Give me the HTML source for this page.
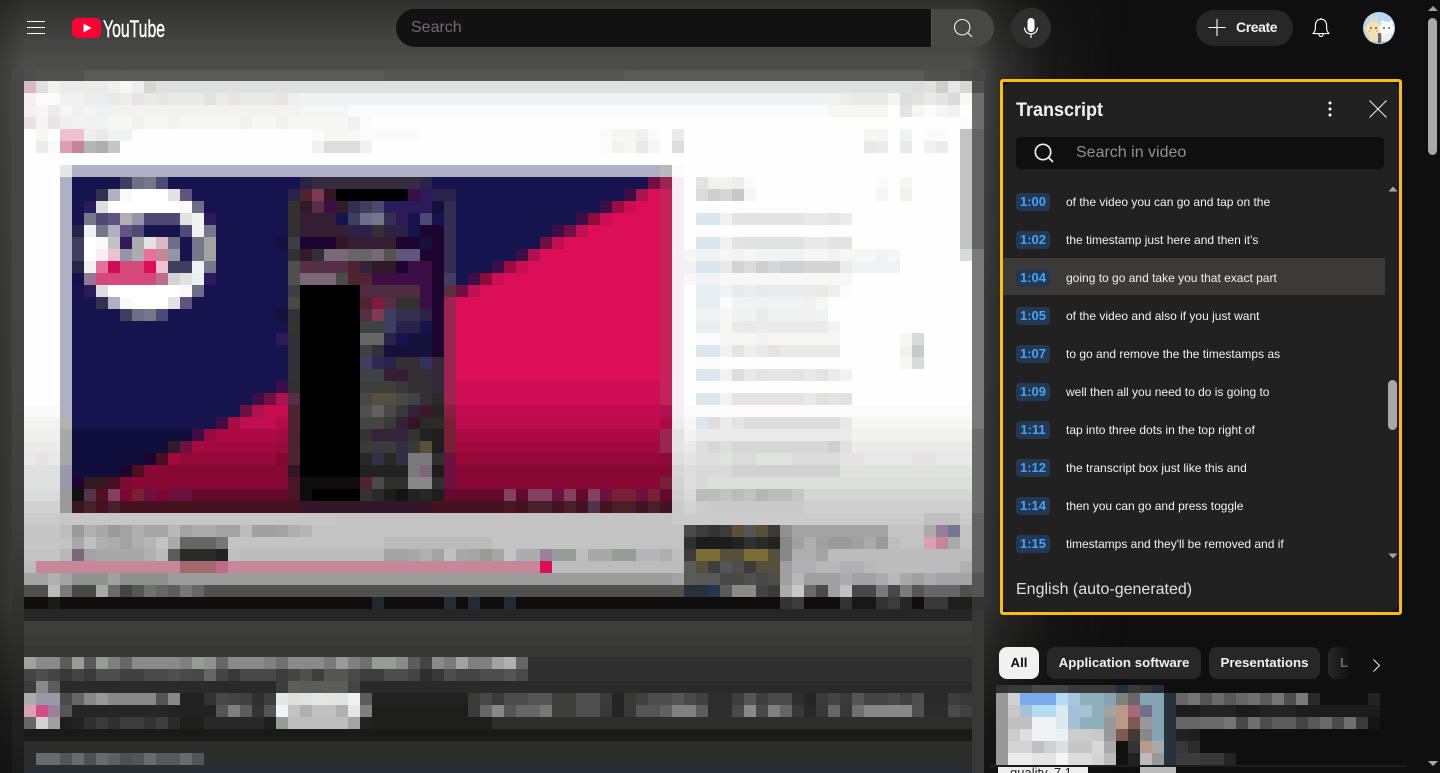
<!DOCTYPE html>
<html lang="en">
<head>
<meta charset="utf-8">
<title>YouTube</title>
<style>
*{box-sizing:border-box}
html,body{margin:0;padding:0;width:1440px;height:773px;overflow:hidden;background:#0f0f0f;font-family:"Liberation Sans",sans-serif;color:#f1f1f1}
.wrap{position:absolute;left:0;top:0;width:1440px;height:773px;overflow:hidden}
.a{position:absolute}
.glow{left:0;top:0;width:1130px;height:773px;background:linear-gradient(180deg,#2e2e2c 0,#3c3c3a 25px,#4c4c4a 60px,#4f4f4d 80px,#454543 300px,#3e3e3c 600px,#2c2c2a 660px,#1c1c1c 720px,#151515 773px);-webkit-mask-image:linear-gradient(90deg,#000 970px,rgba(0,0,0,.55) 1000px,rgba(0,0,0,.15) 1050px,transparent 1125px);mask-image:linear-gradient(90deg,#000 970px,rgba(0,0,0,.55) 1000px,rgba(0,0,0,.15) 1050px,transparent 1125px)}
.edge{left:0;top:0;width:26px;height:773px;background:linear-gradient(90deg,rgba(15,15,15,.3),rgba(15,15,15,0))}
.m{left:24px;top:81px;width:1416px;height:692px;shape-rendering:crispEdges}
.m rect{height:1px}
.panel{left:1000px;top:79px;width:402px;height:536px;border:3px solid #ffbb10;border-radius:3px;background:#0f0f0f}
.inner{position:absolute;inset:0;background:#212121;border-radius:9px}
.row{position:absolute;left:1016px;height:18px;width:340px}
.ts{position:absolute;left:0;top:0;width:34px;height:18px;border-radius:4px;background:#263850;color:#3ea6ff;font-size:13px;font-weight:700;line-height:18px;text-align:center}
.tx{position:absolute;left:50px;top:0;font-size:12px;line-height:18px;color:#f1f1f1;white-space:nowrap}
.hl{left:1003px;top:258px;width:382px;height:37px;background:#3b3a38}
.chip{top:647px;height:32px;border-radius:8px;background:#272727;font-size:13.3px;font-weight:700;line-height:31px;text-align:center;color:#f1f1f1;white-space:nowrap}
</style>
</head>
<body>
<div class="wrap">
<div class="a glow"></div>
<div class="a edge"></div>
<div class="a" style="left:12px;top:70px;width:973px;height:11px;background:linear-gradient(90deg,#484846 0 12px,#4e4e4c 12px 24px,#515150 24px 72px,#5a5a58 72px 372px,#555553 372px 612px,#5a5a58 612px 912px,#525250 912px 948px,#4a4a48 948px 960px,#454543 960px 973px)"></div>
<div class="a" style="left:12px;top:81px;width:12px;height:692px;background:linear-gradient(180deg,#474745 0,#444442 300px,#3e3e3c 440px,#363634 500px,#2c2c2a 560px,#222 620px,#1b1b1b 692px)"></div>

<svg class="a m" viewBox="0 0 118 57.667">
<g transform=translate(0,0)><rect x=0 width=79 fill=#dfe1e0 /><rect x=0 width=1 fill=#d9b8c6 /><rect x=1 width=1 fill=#dfe0df /><rect x=2 width=1 fill=#f1f1ef /><rect x=3 width=4 fill=#ebebea /><rect x=7 width=1 fill=#f0f0ee /><rect x=8 width=1 fill=#f6f6f3 /><rect x=9 width=1 fill=#eee /><rect x=10 width=1 fill=#d5d6d4 /><rect x=74 width=1 fill=#dcdcdc /><rect x=76 width=1 fill=#cfcecd /><rect x=77 width=1 fill=#e5e6e5 /><rect x=78 width=1 fill=#d6d7d5 /></g>
<g transform=translate(0,1)><rect x=0 width=79 fill=#f0f1f3 /><rect x=1 width=2 fill=#fafbfa /><rect x=4 width=1 fill=#f1f1ef /><rect x=5 width=2 fill=#ececec /><rect x=7 width=1 fill=#e8e9e8 /><rect x=8 width=1 fill=#ececec /><rect x=9 width=1 fill=#e6e4e5 /><rect x=10 width=1 fill=#e8e9e8 /><rect x=11 width=1 fill=#e7e5e6 /><rect x=12 width=3 fill=#e8e9e8 /><rect x=15 width=1 fill=#e1e3e1 /><rect x=16 width=1 fill=#e9eae9 /><rect x=17 width=1 fill=#e7e4e6 /><rect x=18 width=3 fill=#e8e9e8 /><rect x=21 width=1 fill=#e6e4e5 /><rect x=22 width=1 fill=#eee /><rect x=67 width=1 fill=#f2f2ef /><rect x=68 width=1 fill=#ededec /><rect x=69 width=3 fill=#e8e9e8 /><rect x=72 width=1 fill=#f3f4f6 /><rect x=73 width=1 fill=#dcdddc /><rect x=74 width=1 fill=#e0e1e0 /><rect x=75 width=1 fill=#e8e9e8 /><rect x=76 width=1 fill=#e6e3e4 /><rect x=77 width=1 fill=#d9dada /><rect x=78 width=1 fill=#f8f8f6 /></g>
<g transform=translate(0,2)><rect x=0 width=79 fill=#fafbfa /><rect x=0 width=1 fill=#f8eef4 /><rect x=1 width=1 fill=#f6f6f4 /><rect x=2 width=1 fill=#ececec /><rect x=3 width=1 fill=#f5f5f1 /><rect x=4 width=1 fill=#f0f1f3 /><rect x=5 width=1 fill=#f3f3f1 /><rect x=6 width=1 fill=#f0f1f4 /><rect x=7 width=16 fill=#f2f2f0 /><rect x=23 width=4 fill=#f5f5f3 /><rect x=67 width=5 fill=#f6f6f3 /><rect x=72 width=1 fill=#fff /><rect x=73 width=1 fill=#e6e3e4 /><rect x=74 width=1 fill=#f5f5f3 /><rect x=76 width=1 fill=#f6f5f3 /><rect x=77 width=1 fill=#f0f1f4 /><rect x=78 width=1 fill=#fff /></g>
<g transform=translate(0,3)><rect x=0 width=79 fill=#fefefe /><rect x=0 width=1 fill=#e5e3e4 /><rect x=1 width=1 fill=#f5f5f3 /><rect x=2 width=1 fill=#e6e4e5 /><rect x=3 width=1 fill=#eee /><rect x=4 width=1 fill=#f1f2f4 /><rect x=5 width=1 fill=#f1f1ef /><rect x=6 width=1 fill=#f1f2f4 /><rect x=7 width=20 fill=#f6f6f3 /><rect x=9 width=1 fill=#f1f1ef /><rect x=12 width=1 fill=#f2f2f0 /><rect x=18 width=1 fill=#f1f1ef /><rect x=21 width=1 fill=#f1f1ef /><rect x=27 width=1 fill=#f1f1ef /><rect x=28 width=1 fill=#fafbfa /><rect x=78 width=1 fill=#fafbfa /></g>
<g transform=translate(0,4)><rect x=0 width=78 fill=#fefefe /><rect x=1 width=1 fill=#f6f6f4 /><rect x=3 width=2 fill=#efc0cd /><rect x=5 width=1 fill=#eeeeec /><rect x=6 width=1 fill=#e8e9e8 /><rect x=7 width=2 fill=#f0f1f3 /><rect x=24 width=1 fill=#fafbfa /><rect x=25 width=3 fill=#f6f6f4 /><rect x=28 width=5 fill=#fafbfa /><rect x=48 width=1 fill=#fafbfa /><rect x=49 width=2 fill=#f6f6f4 /><rect x=51 width=1 fill=#f0f0ee /><rect x=52 width=1 fill=#fafbfa /><rect x=54 width=1 fill=#eaeaea /><rect x=70 width=2 fill=#f6f6f4 /><rect x=73 width=1 fill=#f0f1f3 /><rect x=75 width=2 fill=#fafbfa /><rect x=78 width=1 fill=#c2c3c2 /></g>
<g transform=translate(0,5)><rect x=0 width=78 fill=#fefefe /><rect x=1 width=1 fill=#ebebeb /><rect x=2 width=1 fill=#f8f9f8 /><rect x=3 width=1 fill=#dc9fb0 /><rect x=4 width=1 fill=#c78596 /><rect x=5 width=1 fill=#b5b5b4 /><rect x=6 width=1 fill=#aeaeae /><rect x=7 width=1 fill=#c6c6c5 /><rect x=24 width=1 fill=#f1f1ef /><rect x=25 width=3 fill=#dcdddc /><rect x=28 width=1 fill=#f1f1ef /><rect x=48 width=1 fill=#fafbfa /><rect x=49 width=1 fill=#f2f2f0 /><rect x=50 width=1 fill=#f6f6f4 /><rect x=51 width=1 fill=#e8e9e8 /><rect x=52 width=1 fill=#f6f6f4 /><rect x=54 width=1 fill=#dcdddc /><rect x=70 width=1 fill=#e8e9e8 /><rect x=71 width=1 fill=#ebebeb /><rect x=73 width=1 fill=#e8e9e8 /><rect x=75 width=1 fill=#f0f1f3 /><rect x=76 width=1 fill=#ebebeb /><rect x=78 width=1 fill=#c2c3c2 /></g>
<g transform=translate(0,6)><rect x=0 width=78 fill=#fefefe /><rect x=78 width=1 fill=#c2c3c2 /></g>
<g transform=translate(0,7)><rect x=0 width=78 fill=#fefefe /><rect x=3 width=1 fill=#e6e7e5 /><rect x=4 width=49 fill=#b0b0c4 /><rect x=53 width=1 fill=#b9b9b8 /><rect x=54 width=1 fill=#fafbfa /><rect x=78 width=1 fill=#c2c3c2 /></g>

<rect x=0 y=8 width=79 style="height:20px" fill=#fefefe />
<rect x=3 y=8 width=1 style="height:20px" fill=#b0b0c4 />
<rect x=4 y=8 width=49 style="height:20px" fill=#16144f />
<rect x=53 y=8 width=1 style="height:20px" fill=#c4235a />
<rect x=54 y=8 width=1 style="height:20px" fill=#f8edf3 />
<rect x=78 y=8 width=1 style="height:7px" fill=#c2c3c2 />

<rect x=36 y=18 width=17 style="height:7px" fill=#dc0e58 />
<g transform=translate(0,8)><rect x=52 width=1 fill=#6c1140 /><rect x=53 width=1 fill=#9c2450 /></g>
<g transform=translate(0,9)><rect x=50 width=1 fill=#3d0d46 /><rect x=51 width=1 fill=#ac134f /><rect x=52 width=1 fill=#dc0e58 /></g>
<g transform=translate(0,10)><rect x=48 width=1 fill=#3d0d46 /><rect x=49 width=1 fill=#9c0c40 /><rect x=50 width=1 fill=#cb0e54 /><rect x=51 width=2 fill=#dc0e58 /></g>
<g transform=translate(0,11)><rect x=46 width=1 fill=#3d0d46 /><rect x=47 width=1 fill=#8c0c3a /><rect x=48 width=1 fill=#cc0e55 /><rect x=49 width=4 fill=#dc0e58 /></g>
<g transform=translate(0,12)><rect x=44 width=1 fill=#3d0d46 /><rect x=45 width=1 fill=#6c1140 /><rect x=46 width=1 fill=#c01050 /><rect x=47 width=6 fill=#dc0e58 /></g>
<g transform=translate(0,13)><rect x=43 width=1 fill=#6c1140 /><rect x=44 width=1 fill=#bd1050 /><rect x=45 width=8 fill=#dc0e58 /></g>
<g transform=translate(0,14)><rect x=41 width=1 fill=#3d0d46 /><rect x=42 width=1 fill=#ac134f /><rect x=43 width=10 fill=#dc0e58 /></g>
<g transform=translate(0,15)><rect x=39 width=1 fill=#3d0d46 /><rect x=40 width=1 fill=#9c0c40 /><rect x=41 width=1 fill=#cb0e54 /><rect x=42 width=11 fill=#dc0e58 /></g>
<g transform=translate(0,16)><rect x=37 width=1 fill=#3d0d46 /><rect x=38 width=1 fill=#8c0c3a /><rect x=39 width=1 fill=#cc0e55 /><rect x=40 width=13 fill=#dc0e58 /></g>
<g transform=translate(0,17)><rect x=35 width=1 fill=#5a3040 /><rect x=36 width=1 fill=#6c1140 /><rect x=37 width=1 fill=#c01050 /><rect x=38 width=15 fill=#dc0e58 /></g>
<rect x=35 y=18 width=1 style="height:9px" fill=#9c2450 />
<rect x=36 y=25 width=17 style="height:2px" fill=#cf0d55 />
<g transform=translate(0,27)><rect x=35 width=1 fill=#8a2040 /><rect x=36 width=17 fill=#c20c4f /><rect x=53 width=1 fill=#ae1252 /></g>

<g transform=translate(0,8)><rect x=56 width=1 fill=#e3e1e2 /><rect x=57 width=2 fill=#f1f1ef /><rect x=59 width=1 fill=#ededed /><rect x=60 width=1 fill=#fafbfa /><rect x=71 width=1 fill=#fafbfa /><rect x=73 width=1 fill=#f6f6f4 /></g>
<g transform=translate(0,9)><rect x=56 width=1 fill=#dadbda /><rect x=57 width=1 fill=#cfcfcf /><rect x=58 width=1 fill=#d5d6d5 /><rect x=59 width=1 fill=#c8c8c8 /><rect x=60 width=1 fill=#f6f6f4 /><rect x=71 width=1 fill=#f6f6f4 /><rect x=73 width=1 fill=#f1f1ef /></g>
<g transform=translate(0,11)><rect x=56 width=2 fill=#dae7ee /><rect x=58 width=1 fill=#f1f1ef /><rect x=59 width=1 fill=#e5e3e4 /><rect x=60 width=1 fill=#e3e5e3 /><rect x=61 width=4 fill=#e5e3e4 /><rect x=65 width=2 fill=#e8e9e8 /><rect x=67 width=1 fill=#e6e4e5 /><rect x=68 width=1 fill=#ebebeb /></g>
<g transform=translate(0,13)><rect x=56 width=2 fill=#dae7ee /><rect x=58 width=1 fill=#f1f1ef /><rect x=59 width=1 fill=#e5e3e4 /><rect x=60 width=5 fill=#e0e2e0 /><rect x=65 width=2 fill=#e8e9e8 /><rect x=67 width=1 fill=#e3e5e3 /><rect x=68 width=1 fill=#e5e3e4 /></g>
<g transform=translate(0,14)><rect x=55 width=18 fill=#f6f6f4 /><rect x=56 width=2 fill=#f1f2f4 /><rect x=59 width=1 fill=#f1f2f4 /><rect x=61 width=4 fill=#f1f2f4 /><rect x=67 width=1 fill=#f1f2f4 /><rect x=71 width=1 fill=#f1f2f4 /><rect x=78 width=1 fill=#d9dada /></g>
<g transform=translate(0,15)><rect x=55 width=18 fill=#f1f2f4 /><rect x=56 width=2 fill=#dae7ee /><rect x=58 width=1 fill=#e8e9e8 /><rect x=59 width=1 fill=#d2d3d2 /><rect x=60 width=1 fill=#dadbda /><rect x=61 width=1 fill=#cfcfcf /><rect x=62 width=1 fill=#d5d6d5 /><rect x=63 width=2 fill=#d0d0d0 /><rect x=65 width=3 fill=#d4d5d4 /><rect x=68 width=1 fill=#ebebeb /></g>
<g transform=translate(0,16)><rect x=55 width=14 fill=#f7f7f5 /><rect x=56 width=2 fill=#f1f2f4 /></g>
<g transform=translate(0,17)><rect x=56 width=2 fill=#e6eef2 /><rect x=58 width=1 fill=#f1f2f4 /><rect x=59 width=1 fill=#e8e9e8 /><rect x=60 width=1 fill=#ededed /><rect x=61 width=1 fill=#e8e9e8 /><rect x=62 width=4 fill=#ebebeb /><rect x=66 width=1 fill=#e8e9e8 /><rect x=67 width=1 fill=#eee /><rect x=68 width=1 fill=#fafbfa /></g>
<g transform=translate(0,18)><rect x=56 width=2 fill=#e6eef2 /><rect x=58 width=1 fill=#fafbfa /><rect x=59 width=6 fill=#f1f2f4 /><rect x=65 width=1 fill=#f1f1ef /><rect x=66 width=1 fill=#f6f6f4 /></g>
<g transform=translate(0,19)><rect x=56 width=2 fill=#f1f2f4 /><rect x=58 width=1 fill=#f6f6f4 /><rect x=59 width=2 fill=#f1f1ef /><rect x=61 width=1 fill=#ebebeb /><rect x=62 width=4 fill=#f1f1ef /><rect x=66 width=1 fill=#f1f2f4 /></g>
<g transform=translate(0,20)><rect x=56 width=2 fill=#e6eef2 /><rect x=58 width=1 fill=#f6f6f4 /><rect x=59 width=1 fill=#ebebeb /><rect x=60 width=1 fill=#e8e9e8 /><rect x=61 width=6 fill=#ebebeb /><rect x=67 width=1 fill=#f1f2f4 /></g>
<g transform=translate(0,21)><rect x=56 width=2 fill=#fafbfa /><rect x=58 width=3 fill=#f6f6f4 /><rect x=61 width=1 fill=#f1f2f4 /><rect x=62 width=6 fill=#f6f6f4 /><rect x=73 width=1 fill=#f6f6f4 /><rect x=74 width=1 fill=#d9dada /></g>
<g transform=translate(0,22)><rect x=56 width=2 fill=#dae7ee /><rect x=58 width=1 fill=#f1f2f4 /><rect x=59 width=1 fill=#e5e3e4 /><rect x=60 width=1 fill=#eee /><rect x=61 width=1 fill=#e8e9e8 /><rect x=62 width=1 fill=#e5e3e4 /><rect x=63 width=5 fill=#e8e9e8 /><rect x=73 width=1 fill=#f1f1ef /><rect x=74 width=1 fill=#c9c9c9 /></g>
<g transform=translate(0,23)><rect x=56 width=2 fill=#fafbfa /><rect x=73 width=1 fill=#f6f6f4 /><rect x=74 width=1 fill=#d9dada /></g>
<g transform=translate(0,24)><rect x=56 width=2 fill=#dae7ee /><rect x=58 width=1 fill=#f1f1ef /><rect x=59 width=1 fill=#dddedd /><rect x=60 width=1 fill=#e8e9e8 /><rect x=61 width=1 fill=#e5e3e4 /><rect x=62 width=2 fill=#e5e6e5 /><rect x=64 width=1 fill=#e5e3e4 /><rect x=65 width=1 fill=#e8e9e8 /><rect x=66 width=1 fill=#e5e3e4 /><rect x=67 width=1 fill=#ebebeb /><rect x=68 width=1 fill=#f1f1ef /></g>
<g transform=translate(0,26)><rect x=56 width=2 fill=#dae7ee /><rect x=58 width=1 fill=#f1f2f4 /><rect x=59 width=6 fill=#e5e3e4 /><rect x=65 width=1 fill=#e8e9e8 /><rect x=66 width=1 fill=#e0e2e0 /><rect x=67 width=1 fill=#e5e3e4 /><rect x=68 width=1 fill=#e0e2e0 /></g>
<g transform=translate(0,27)><rect x=55 width=24 fill=#fafbfa /></g>

<g transform=translate(0,27)><rect x=0 width=3 fill=#f9faf9 /></g>
<g transform=translate(0,28)><rect x=0 width=3 fill=#f3f3f1 /><rect x=3 width=1 fill=#b3b3b1 /><rect x=4 width=31 fill=#16144f /><rect x=35 width=1 fill=#7a2035 /><rect x=36 width=17 fill=#bd0b4c /><rect x=53 width=1 fill=#ab0a44 /><rect x=54 width=1 fill=#ededed /><rect x=55 width=1 fill=#f6f6f4 /><rect x=56 width=1 fill=#dae7ee /><rect x=57 width=1 fill=#dedede /><rect x=58 width=1 fill=#ebebeb /><rect x=59 width=1 fill=#e3e5e3 /><rect x=60 width=8 fill=#dcdddc /><rect x=68 width=1 fill=#e8e9e8 /><rect x=69 width=10 fill=#f6f6f4 /></g>
<g transform=translate(0,29)><rect x=0 width=3 fill=#efefed /><rect x=3 width=1 fill=#a8a8a8 /><rect x=4 width=31 fill=#100e3a /><rect x=35 width=1 fill=#7a2035 /><rect x=36 width=17 fill=#ab0a44 /><rect x=53 width=1 fill=#9c2450 /><rect x=54 width=1 fill=#e5e3e4 /><rect x=55 width=1 fill=#f3f3f1 /><rect x=56 width=13 fill=#ebebeb /><rect x=69 width=10 fill=#f1f1ef /></g>
<g transform=translate(0,30)><rect x=0 width=3 fill=#ebebeb /><rect x=3 width=1 fill=#a8a8a8 /><rect x=4 width=31 fill=#100e3a /><rect x=35 width=1 fill=#7a2035 /><rect x=36 width=17 fill=#a00a3f /><rect x=53 width=1 fill=#9c2450 /><rect x=54 width=1 fill=#e5e3e4 /><rect x=55 width=1 fill=#ebebeb /><rect x=56 width=1 fill=#dcdddc /><rect x=57 width=1 fill=#d5d6d5 /><rect x=58 width=1 fill=#dcdddc /><rect x=59 width=8 fill=#d5d6d5 /><rect x=67 width=1 fill=#cfcfcf /><rect x=68 width=1 fill=#e0e2e0 /><rect x=69 width=10 fill=#ebebeb /></g>
<g transform=translate(0,31)><rect x=0 width=1 fill=#e8e9e8 /><rect x=1 width=1 fill=#e5e3e4 /><rect x=2 width=1 fill=#e8e9e8 /><rect x=3 width=1 fill=#a8a8a8 /><rect x=4 width=31 fill=#100e3a /><rect x=35 width=1 fill=#6c1140 /><rect x=36 width=17 fill=#950938 /><rect x=53 width=1 fill=#8a0a38 /><rect x=54 width=1 fill=#dcdddc /><rect x=55 width=1 fill=#e5e3e4 /><rect x=56 width=2 fill=#dcdddc /><rect x=58 width=1 fill=#e0e2e0 /><rect x=59 width=2 fill=#dadbda /><rect x=61 width=3 fill=#e0e2e0 /><rect x=64 width=4 fill=#dadbda /><rect x=68 width=2 fill=#e5e3e4 /><rect x=70 width=4 fill=#e8e9e8 /><rect x=74 width=2 fill=#e5e3e4 /><rect x=76 width=3 fill=#e8e9e8 /></g>
<g transform=translate(0,32)><rect x=0 width=3 fill=#dfe1e0 /><rect x=3 width=1 fill=#9999ab /><rect x=4 width=31 fill=#100e3a /><rect x=35 width=1 fill=#6c1140 /><rect x=36 width=17 fill=#870832 /><rect x=53 width=1 fill=#870832 /><rect x=54 width=1 fill=#d5d6d5 /><rect x=55 width=1 fill=#dcdddc /><rect x=56 width=3 fill=#d8d9d8 /><rect x=59 width=9 fill=#d1d1d1 /><rect x=68 width=11 fill=#e0e2e0 /></g>
<g transform=translate(0,33)><rect x=0 width=3 fill=#dfe1e0 /><rect x=3 width=1 fill=#9999ab /><rect x=35 width=1 fill=#6c1140 /><rect x=36 width=17 fill=#870832 /><rect x=53 width=1 fill=#7a2035 /><rect x=54 width=1 fill=#d2d2d2 /><rect x=55 width=1 fill=#dcdddc /><rect x=56 width=1 fill=#d8d9d8 /><rect x=57 width=22 fill=#dcdedc /></g>
<g transform=translate(0,34)><rect x=0 width=3 fill=#d9dad9 /><rect x=3 width=1 fill=#999b99 /><rect x=35 width=19 fill=#65092c /><rect x=40 width=1 fill=#854060 /><rect x=42 width=2 fill=#854060 /><rect x=44 width=1 fill=#6c1140 /><rect x=45 width=1 fill=#854060 /><rect x=47 width=1 fill=#854060 /><rect x=48 width=1 fill=#6c1140 /><rect x=49 width=2 fill=#7a2035 /><rect x=51 width=1 fill=#6c1140 /><rect x=52 width=1 fill=#7a2035 /><rect x=54 width=1 fill=#cfcfcf /><rect x=55 width=1 fill=#d8d9d8 /><rect x=56 width=2 fill=#bbb /><rect x=58 width=1 fill=#c2c2c2 /><rect x=59 width=1 fill=#bbb /><rect x=60 width=1 fill=#c2c2c2 /><rect x=61 width=1 fill=#b5b5b5 /><rect x=62 width=2 fill=#bcbcbc /><rect x=64 width=1 fill=#c6c6c6 /><rect x=65 width=14 fill=#d5d6d5 /></g>
<g transform=translate(0,35)><rect x=0 width=3 fill=#d1d1d1 /><rect x=3 width=1 fill=#999b99 /><rect x=4 width=1 fill=#3a1525 /><rect x=5 width=1 fill=#4a2028 /><rect x=6 width=1 fill=#4a1020 /><rect x=7 width=1 fill=#4a2028 /><rect x=8 width=15 fill=#45121f /><rect x=23 width=11 fill=#331628 /><rect x=34 width=20 fill=#45121f /><rect x=40 width=1 fill=#4a1525 /><rect x=42 width=2 fill=#4a2028 /><rect x=45 width=1 fill=#4a2028 /><rect x=47 width=1 fill=#4e3548 /><rect x=49 width=2 fill=#4a2028 /><rect x=52 width=1 fill=#4a2028 /><rect x=54 width=1 fill=#c9cac9 /><rect x=55 width=1 fill=#d2d3d2 /><rect x=56 width=1 fill=#ccc /><rect x=57 width=8 fill=#c9cac9 /><rect x=65 width=14 fill=#cfcfcf /></g>
<g transform=translate(0,25)><rect x=21 width=1 fill=#3d0d46 /></g>
<g transform=translate(0,26)><rect x=19 width=1 fill=#3d0d46 /><rect x=20 width=1 fill=#6c1140 /><rect x=21 width=1 fill=#ac134f /></g>
<g transform=translate(0,27)><rect x=18 width=1 fill=#6c1140 /><rect x=19 width=1 fill=#ac134f /><rect x=20 width=2 fill=#c70d50 /></g>
<g transform=translate(0,28)><rect x=16 width=1 fill=#3d0d46 /><rect x=17 width=1 fill=#a80d42 /><rect x=18 width=3 fill=#c00e50 /><rect x=21 width=1 fill=#b50c47 /></g>
<g transform=translate(0,29)><rect x=14 width=1 fill=#3d0d46 /><rect x=15 width=1 fill=#960d3d /><rect x=16 width=5 fill=#ad0a44 /><rect x=21 width=1 fill=#a50a40 /></g>
<g transform=translate(0,30)><rect x=12 width=1 fill=#331a28 /><rect x=13 width=1 fill=#6c1140 /><rect x=14 width=1 fill=#a40a40 /><rect x=15 width=6 fill=#a00a3f /><rect x=21 width=1 fill=#9a0a3c /></g>
<g transform=translate(0,31)><rect x=10 width=1 fill=#1e0530 /><rect x=11 width=1 fill=#4a1020 /><rect x=12 width=1 fill=#a00a3a /><rect x=13 width=8 fill=#950938 /><rect x=21 width=1 fill=#850830 /></g>
<g transform=translate(0,32)><rect x=8 width=1 fill=#1e0530 /><rect x=9 width=1 fill=#4a1020 /><rect x=10 width=12 fill=#870832 /></g>
<g transform=translate(0,33)><rect x=4 width=1 fill=#1e0530 /><rect x=5 width=2 fill=#331a20 /><rect x=7 width=1 fill=#4a1020 /><rect x=8 width=1 fill=#800a30 /><rect x=9 width=13 fill=#870832 /></g>
<g transform=translate(0,34)><rect x=4 width=1 fill=#111110 /><rect x=5 width=1 fill=#533545 /><rect x=6 width=1 fill=#4f1020 /><rect x=7 width=1 fill=#854060 /><rect x=8 width=1 fill=#7a0830 /><rect x=9 width=1 fill=#7a2035 /><rect x=10 width=1 fill=#6c1140 /><rect x=11 width=1 fill=#7a0830 /><rect x=12 width=2 fill=#6c1140 /><rect x=14 width=8 fill=#65092c /></g>

<g transform=translate(0,8)><rect x=23 width=1 fill=#2a2248 /><rect x=24 width=9 fill=#352d3f /><rect x=33 width=1 fill=#2a2248 /></g>
<g transform=translate(0,9)><rect x=22 width=1 fill=#2a2248 /><rect x=23 width=1 fill=#4f2330 /><rect x=24 width=1 fill=#803a55 /><rect x=25 width=1 fill=#331622 /><rect x=26 width=6 fill=#000 /><rect x=32 width=1 fill=#3d0d46 /><rect x=33 width=1 fill=#2d1a5c /><rect x=34 width=2 fill=#2a2248 /></g>
<g transform=translate(0,10)><rect x=22 width=1 fill=#333030 /><rect x=23 width=1 fill=#331a28 /><rect x=24 width=1 fill=#553045 /><rect x=25 width=1 fill=#3d0d46 /><rect x=26 width=1 fill=#331a28 /><rect x=27 width=1 fill=#303050 /><rect x=28 width=1 fill=#3e3e60 /><rect x=29 width=1 fill=#4a4a70 /><rect x=30 width=4 fill=#2a1c5a /><rect x=34 width=1 fill=#14123a /><rect x=35 width=1 fill=#352d4f /></g>
<g transform=translate(0,11)><rect x=22 width=1 fill=#333030 /><rect x=23 width=3 fill=#331e33 /><rect x=27 width=1 fill=#3e3e60 /><rect x=28 width=1 fill=#6e6e88 /><rect x=29 width=1 fill=#77778a /><rect x=30 width=1 fill=#333050 /><rect x=31 width=1 fill=#2d1a5c /><rect x=33 width=1 fill=#4f4a75 /><rect x=35 width=1 fill=#352d4f /></g>
<g transform=translate(0,12)><rect x=22 width=1 fill=#333030 /><rect x=23 width=4 fill=#331e33 /><rect x=27 width=2 fill=#2a2248 /><rect x=29 width=1 fill=#353035 /><rect x=30 width=2 fill=#2a2240 /><rect x=33 width=2 fill=#1e0530 /><rect x=35 width=1 fill=#352d4f /></g>
<g transform=translate(0,13)><rect x=21 width=1 fill=#13123d /><rect x=22 width=1 fill=#3d3f45 /><rect x=23 width=3 fill=#1e0530 /><rect x=26 width=1 fill=#331622 /><rect x=27 width=4 fill=#331e33 /><rect x=31 width=2 fill=#1e0530 /><rect x=33 width=1 fill=#14123a /><rect x=34 width=1 fill=#1e0530 /><rect x=35 width=1 fill=#352d4f /></g>
<g transform=translate(0,14)><rect x=22 width=1 fill=#333030 /><rect x=23 width=1 fill=#331a28 /><rect x=24 width=1 fill=#333035 /><rect x=25 width=2 fill=#7a6878 /><rect x=27 width=2 fill=#666664 /><rect x=29 width=1 fill=#7a6878 /><rect x=30 width=1 fill=#555550 /><rect x=31 width=2 fill=#5f5580 /><rect x=33 width=2 fill=#1e0530 /><rect x=35 width=1 fill=#352d4f /></g>
<g transform=translate(0,15)><rect x=22 width=1 fill=#50504c /><rect x=23 width=4 fill=#553045 /><rect x=27 width=1 fill=#4f2330 /><rect x=28 width=1 fill=#332238 /><rect x=29 width=2 fill=#301a28 /><rect x=31 width=1 fill=#1e0530 /><rect x=32 width=2 fill=#3d0d46 /><rect x=34 width=1 fill=#1e0530 /><rect x=35 width=1 fill=#352d4f /></g>
<g transform=translate(0,16)><rect x=22 width=1 fill=#50504c /><rect x=23 width=3 fill=#7a6878 /><rect x=26 width=1 fill=#4a4a46 /><rect x=27 width=2 fill=#4f2330 /><rect x=29 width=5 fill=#3d0d46 /><rect x=34 width=1 fill=#1e0530 /><rect x=35 width=1 fill=#3e3e60 /></g>
<rect x=23 y=17 width=5 style="height:16px" fill=#000 />
<g transform=translate(0,17)><rect x=22 width=1 fill=#3d3f45 /><rect x=28 width=5 fill=#4f2c3f /><rect x=33 width=1 fill=#3d0d46 /><rect x=34 width=1 fill=#1e0530 /></g>
<g transform=translate(0,18)><rect x=22 width=1 fill=#484844 /><rect x=28 width=1 fill=#4f2330 /><rect x=29 width=1 fill=#7a1c3a /><rect x=30 width=1 fill=#553045 /><rect x=31 width=2 fill=#333030 /><rect x=33 width=1 fill=#3d0d46 /><rect x=34 width=1 fill=#1e0530 /></g>
<g transform=translate(0,19)><rect x=21 width=1 fill=#13123d /><rect x=22 width=1 fill=#35303a /><rect x=28 width=1 fill=#553045 /><rect x=29 width=1 fill=#803a55 /><rect x=30 width=1 fill=#3e3e60 /><rect x=31 width=2 fill=#333050 /><rect x=33 width=1 fill=#2a2248 /><rect x=34 width=1 fill=#1e0530 /></g>
<g transform=translate(0,20)><rect x=22 width=1 fill=#333330 /><rect x=28 width=2 fill=#3d4245 /><rect x=30 width=1 fill=#3e3e60 /><rect x=31 width=2 fill=#2a2248 /><rect x=34 width=1 fill=#1e0530 /></g>
<g transform=translate(0,21)><rect x=21 width=1 fill=#2d1a5c /><rect x=22 width=1 fill=#333038 /><rect x=28 width=2 fill=#666664 /><rect x=30 width=1 fill=#2a2248 /><rect x=32 width=2 fill=#14123a /><rect x=34 width=1 fill=#1e0530 /></g>
<g transform=translate(0,22)><rect x=22 width=1 fill=#333038 /><rect x=28 width=1 fill=#3d4245 /><rect x=29 width=1 fill=#332d3d /><rect x=30 width=4 fill=#14123a /><rect x=34 width=1 fill=#1e0530 /></g>
<g transform=translate(0,23)><rect x=22 width=1 fill=#333038 /><rect x=28 width=1 fill=#3e3e60 /><rect x=29 width=1 fill=#2f2a55 /><rect x=30 width=1 fill=#2a2248 /><rect x=31 width=2 fill=#353035 /><rect x=33 width=1 fill=#333060 /><rect x=34 width=1 fill=#332838 /></g>
<g transform=translate(0,24)><rect x=22 width=1 fill=#333038 /><rect x=28 width=2 fill=#3d4245 /><rect x=30 width=2 fill=#331e33 /><rect x=32 width=2 fill=#353035 /><rect x=34 width=1 fill=#332838 /></g>
<g transform=translate(0,25)><rect x=22 width=1 fill=#333030 /><rect x=28 width=3 fill=#3e3e3c /><rect x=31 width=1 fill=#383836 /><rect x=32 width=2 fill=#353035 /><rect x=34 width=1 fill=#332838 /></g>
<g transform=translate(0,26)><rect x=22 width=1 fill=#552f45 /><rect x=28 width=1 fill=#484846 /><rect x=29 width=2 fill=#55503a /><rect x=31 width=1 fill=#484846 /><rect x=32 width=1 fill=#3d4245 /><rect x=33 width=1 fill=#353035 /><rect x=34 width=1 fill=#2a2a2a /></g>
<g transform=translate(0,27)><rect x=22 width=1 fill=#4f2330 /><rect x=28 width=1 fill=#505050 /><rect x=29 width=1 fill=#606060 /><rect x=30 width=1 fill=#484848 /><rect x=31 width=1 fill=#383836 /><rect x=32 width=1 fill=#332238 /><rect x=33 width=1 fill=#3a1a28 /><rect x=34 width=1 fill=#252525 /></g>
<g transform=translate(0,28)><rect x=22 width=1 fill=#4f2330 /><rect x=28 width=2 fill=#444442 /><rect x=30 width=1 fill=#3a3a38 /><rect x=31 width=1 fill=#332238 /><rect x=32 width=1 fill=#331622 /><rect x=33 width=2 fill=#2a2a28 /></g>
<g transform=translate(0,29)><rect x=22 width=1 fill=#4f2330 /><rect x=28 width=1 fill=#333330 /><rect x=29 width=3 fill=#33243a /><rect x=32 width=1 fill=#333330 /><rect x=33 width=1 fill=#222 /><rect x=34 width=1 fill=#1e1e1c /></g>
<g transform=translate(0,30)><rect x=22 width=1 fill=#4f2330 /><rect x=28 width=3 fill=#3a3a38 /><rect x=31 width=1 fill=#332d45 /><rect x=32 width=1 fill=#3a3a38 /><rect x=33 width=1 fill=#5a5038 /><rect x=34 width=1 fill=#1e1e1c /></g>
<g transform=translate(0,31)><rect x=22 width=1 fill=#4f2330 /><rect x=28 width=1 fill=#282826 /><rect x=29 width=1 fill=#333045 /><rect x=30 width=1 fill=#282826 /><rect x=31 width=1 fill=#332d45 /><rect x=32 width=2 fill=#7a7a7a /><rect x=34 width=1 fill=#2e2e2e /></g>
<g transform=translate(0,32)><rect x=22 width=1 fill=#331528 /><rect x=28 width=4 fill=#222220 /><rect x=32 width=1 fill=#7a7a7a /><rect x=33 width=1 fill=#7a6878 /><rect x=34 width=1 fill=#1c1c1a /></g>
<g transform=translate(0,33)><rect x=22 width=1 fill=#4a1525 /><rect x=23 width=5 fill=#100c0c /><rect x=28 width=1 fill=#4f2330 /><rect x=29 width=1 fill=#4a4a4a /><rect x=30 width=2 fill=#303030 /><rect x=32 width=2 fill=#888 /><rect x=34 width=1 fill=#2e2e2e /></g>
<g transform=translate(0,34)><rect x=22 width=1 fill=#4a1525 /><rect x=23 width=1 fill=#100c0c /><rect x=24 width=4 fill=#000 /><rect x=28 width=1 fill=#333 /><rect x=29 width=1 fill=#2a2a2a /><rect x=30 width=1 fill=#1c1c1a /><rect x=31 width=1 fill=#141414 /><rect x=32 width=1 fill=#222 /><rect x=33 width=1 fill=#282828 /><rect x=34 width=1 fill=#1e1e1c /></g>

<g transform=translate(0,8)><rect x=8 width=1 fill=#3e3e60 /><rect x=9 width=1 fill=#6e6e88 /><rect x=10 width=1 fill=#77778a /><rect x=11 width=1 fill=#4f4a75 /></g>
<g transform=translate(0,9)><rect x=6 width=1 fill=#333050 /><rect x=7 width=1 fill=#b0b0c4 /><rect x=8 width=1 fill=#f8f9f8 /><rect x=9 width=3 fill=#fff /><rect x=12 width=1 fill=#e3e1e2 /><rect x=13 width=1 fill=#5f5580 /></g>
<g transform=translate(0,10)><rect x=5 width=1 fill=#2a1c5a /><rect x=6 width=1 fill=#dddedd /><rect x=7 width=6 fill=#fff /><rect x=13 width=1 fill=#f8f9f8 /><rect x=14 width=1 fill=#6e6e88 /></g>
<g transform=translate(0,11)><rect x=5 width=1 fill=#77778a /><rect x=6 width=1 fill=#4f4a75 /><rect x=7 width=1 fill=#5f5580 /><rect x=8 width=1 fill=#b0b0b0 /><rect x=9 width=1 fill=#9595a8 /><rect x=10 width=3 fill=#4f4a75 /><rect x=13 width=1 fill=#e0e2e0 /><rect x=14 width=1 fill=#f0f1f1 /><rect x=15 width=1 fill=#2d1a5c /></g>
<g transform=translate(0,12)><rect x=4 width=1 fill=#2a2248 /><rect x=5 width=1 fill=#f0f1f1 /><rect x=6 width=1 fill=#77778a /><rect x=7 width=1 fill=#b0b0c4 /><rect x=8 width=1 fill=#5f5580 /><rect x=9 width=1 fill=#4f4a75 /><rect x=13 width=1 fill=#4f4a75 /><rect x=14 width=1 fill=#f0f1f1 /><rect x=15 width=1 fill=#77778a /></g>
<g transform=translate(0,13)><rect x=4 width=1 fill=#3e3e60 /><rect x=5 width=1 fill=#fff /><rect x=6 width=1 fill=#f8f9f8 /><rect x=7 width=1 fill=#c2c2c2 /><rect x=8 width=1 fill=#2d1a5c /><rect x=9 width=1 fill=#acacac /><rect x=10 width=1 fill=#e3e3e3 /><rect x=11 width=1 fill=#d9b8c6 /><rect x=12 width=1 fill=#6e6e88 /><rect x=14 width=1 fill=#77778a /><rect x=15 width=1 fill=#a3a3a3 /></g>
<g transform=translate(0,14)><rect x=4 width=1 fill=#3e3e60 /><rect x=5 width=1 fill=#fff /><rect x=6 width=1 fill=#f8eef4 /><rect x=7 width=1 fill=#efc0cd /><rect x=8 width=1 fill=#9595a8 /><rect x=9 width=1 fill=#acacac /><rect x=10 width=1 fill=#e8709a /><rect x=11 width=1 fill=#c78596 /><rect x=12 width=1 fill=#9595a8 /><rect x=14 width=1 fill=#77778a /><rect x=15 width=1 fill=#a3a3a3 /></g>
<g transform=translate(0,15)><rect x=4 width=1 fill=#2a2248 /><rect x=5 width=1 fill=#f0f0ee /><rect x=6 width=1 fill=#e8709a /><rect x=7 width=1 fill=#d00d55 /><rect x=8 width=2 fill=#d5487a /><rect x=10 width=1 fill=#dc0e58 /><rect x=11 width=1 fill=#efc0cd /><rect x=12 width=2 fill=#3e3e60 /><rect x=14 width=1 fill=#f0f1f3 /><rect x=15 width=1 fill=#77778a /></g>
<g transform=translate(0,16)><rect x=4 width=1 fill=#14124a /><rect x=5 width=1 fill=#937898 /><rect x=6 width=5 fill=#d5487a /><rect x=11 width=1 fill=#bf6c88 /><rect x=12 width=1 fill=#d2d2d2 /><rect x=13 width=1 fill=#e0e2e0 /><rect x=14 width=1 fill=#e8eef1 /><rect x=15 width=1 fill=#2d1a5c /></g>
<g transform=translate(0,17)><rect x=5 width=1 fill=#2d1a5c /><rect x=6 width=1 fill=#dddedd /><rect x=7 width=6 fill=#fff /><rect x=13 width=1 fill=#f8f9f8 /><rect x=14 width=1 fill=#6e6e88 /></g>
<g transform=translate(0,18)><rect x=6 width=1 fill=#333050 /><rect x=7 width=1 fill=#b0b0c4 /><rect x=8 width=1 fill=#f8f9f8 /><rect x=9 width=3 fill=#fff /><rect x=12 width=1 fill=#e3e1e2 /><rect x=13 width=1 fill=#5f5580 /></g>
<g transform=translate(0,19)><rect x=8 width=1 fill=#3e3e60 /><rect x=9 width=1 fill=#6e6e88 /><rect x=10 width=1 fill=#77778a /><rect x=11 width=1 fill=#4f4a75 /></g>

<g transform=translate(0,36)><rect x=0 width=3 fill=#cbcbcb /><rect x=3 width=23 fill=#c6c6c6 /><rect x=26 width=28 fill=#c4c2c2 /><rect x=54 width=25 fill=#cbcbcb /><rect x=75 width=3 fill=#c0c0c0 /></g>
<g transform=translate(0,37)><rect x=0 width=3 fill=#c6c6c6 /><rect x=3 width=1 fill=#bdbdbd /><rect x=4 width=1 fill=#9a9a9a /><rect x=5 width=1 fill=#b0b0b0 /><rect x=6 width=1 fill=#a8a8a8 /><rect x=7 width=1 fill=#999b99 /><rect x=8 width=1 fill=#a3a3a3 /><rect x=9 width=1 fill=#aeaeae /><rect x=10 width=2 fill=#a5a5a5 /><rect x=12 width=1 fill=#b8b8b8 /><rect x=13 width=1 fill=#a3a3a3 /><rect x=14 width=2 fill=#acacac /><rect x=16 width=2 fill=#a3a3a3 /><rect x=18 width=1 fill=#bcbcbc /><rect x=19 width=2 fill=#a0a0a0 /><rect x=21 width=1 fill=#a3a3a3 /><rect x=22 width=1 fill=#aeaeae /><rect x=23 width=1 fill=#b5b5b5 /><rect x=24 width=31 fill=#c3c3c3 /><rect x=55 width=1 fill=#4a4a4a /><rect x=56 width=1 fill=#3c3c3c /><rect x=57 width=1 fill=#343432 /><rect x=58 width=1 fill=#3c3c3a /><rect x=59 width=1 fill=#5a5038 /><rect x=60 width=1 fill=#555 /><rect x=61 width=1 fill=#5a5038 /><rect x=62 width=1 fill=#3c3a38 /><rect x=63 width=1 fill=#909090 /><rect x=64 width=8 fill=#a3a3a3 /><rect x=72 width=3 fill=#c3c3c3 /><rect x=75 width=1 fill=#ababab /><rect x=76 width=1 fill=#967f9a /><rect x=77 width=1 fill=#74758f /><rect x=78 width=1 fill=#c3c3c3 /></g>
<g transform=translate(0,38)><rect x=0 width=3 fill=#c6c6c6 /><rect x=3 width=52 fill=#c3c3c3 /><rect x=4 width=1 fill=#a8a8a8 /><rect x=5 width=1 fill=#c0c0c0 /><rect x=6 width=1 fill=#b0b0b0 /><rect x=7 width=1 fill=#acacac /><rect x=8 width=1 fill=#a3a3a3 /><rect x=9 width=1 fill=#aeaeae /><rect x=10 width=1 fill=#b5b5b5 /><rect x=12 width=1 fill=#aaa /><rect x=13 width=3 fill=#666 /><rect x=16 width=1 fill=#777 /><rect x=30 width=9 fill=#bbb /><rect x=55 width=1 fill=#303030 /><rect x=56 width=3 fill=#1c1c1a /><rect x=59 width=1 fill=#222 /><rect x=60 width=1 fill=#303030 /><rect x=61 width=1 fill=#2a2a28 /><rect x=62 width=1 fill=#222 /><rect x=63 width=1 fill=#888 /><rect x=64 width=1 fill=#a0a0a0 /><rect x=65 width=1 fill=#aeaeae /><rect x=66 width=1 fill=#a0a0a0 /><rect x=67 width=2 fill=#9a9a9a /><rect x=69 width=1 fill=#a0a0a0 /><rect x=70 width=1 fill=#aaa /><rect x=71 width=1 fill=#9a9a9a /><rect x=72 width=1 fill=#bdbdbd /><rect x=73 width=2 fill=#c3c3c3 /><rect x=75 width=1 fill=#dc9fb0 /><rect x=76 width=1 fill=#c78596 /><rect x=77 width=1 fill=#aaa /><rect x=78 width=1 fill=#c3c3c3 /></g>
<g transform=translate(0,39)><rect x=0 width=79 fill=#bcbcbc /><rect x=0 width=3 fill=#c3c3c3 /><rect x=3 width=1 fill=#b8b8b8 /><rect x=4 width=1 fill=#7a6878 /><rect x=5 width=1 fill=#a3a3a3 /><rect x=6 width=4 fill=#a8a8a8 /><rect x=10 width=1 fill=#b0b0b0 /><rect x=11 width=1 fill=#bbb /><rect x=12 width=1 fill=#5c5c5c /><rect x=13 width=3 fill=#2a2a28 /><rect x=16 width=1 fill=#222 /><rect x=17 width=1 fill=#c0c0c0 /><rect x=30 width=2 fill=#a3a3a3 /><rect x=32 width=1 fill=#a8a8ac /><rect x=33 width=1 fill=#b0b0b0 /><rect x=34 width=1 fill=#a3a3a3 /><rect x=35 width=1 fill=#c0c0c0 /><rect x=36 width=1 fill=#a8a8ac /><rect x=37 width=1 fill=#a5a5a5 /><rect x=38 width=1 fill=#999b99 /><rect x=39 width=1 fill=#a5a5a5 /><rect x=40 width=1 fill=#c3c3c3 /><rect x=41 width=2 fill=#acacb0 /><rect x=43 width=1 fill=#9a809a /><rect x=44 width=2 fill=#999b99 /><rect x=46 width=1 fill=#bebebe /><rect x=47 width=2 fill=#a8a8a8 /><rect x=49 width=2 fill=#999b99 /><rect x=51 width=2 fill=#b5b5b8 /><rect x=53 width=1 fill=#aeaeae /><rect x=54 width=1 fill=#bebebe /><rect x=55 width=1 fill=#3c3c3a /><rect x=56 width=2 fill=#7a6d35 /><rect x=58 width=2 fill=#55503a /><rect x=60 width=2 fill=#7a6d35 /><rect x=62 width=1 fill=#55503a /><rect x=63 width=1 fill=#888 /><rect x=64 width=2 fill=#aeaeae /><rect x=66 width=1 fill=#a3a3a3 /></g>
<g transform=translate(0,40)><rect x=0 width=79 fill=#bcbcbc /><rect x=1 width=42 fill=#c68898 /><rect x=13 width=3 fill=#a3686c /><rect x=16 width=1 fill=#bf6c88 /><rect x=43 width=1 fill=#dc0e58 /><rect x=55 width=1 fill=#5a5a5a /><rect x=56 width=1 fill=#55503a /><rect x=57 width=1 fill=#3e3e3c /><rect x=58 width=1 fill=#555 /><rect x=59 width=1 fill=#4e4e4e /><rect x=60 width=1 fill=#3c3c3a /><rect x=61 width=2 fill=#55503a /><rect x=63 width=1 fill=#a0a0a0 /><rect x=64 width=2 fill=#b0b0b4 /><rect x=66 width=2 fill=#b8b8b8 /><rect x=68 width=2 fill=#b0b0b4 /><rect x=70 width=1 fill=#b8b8b8 /><rect x=78 width=1 fill=#b0b0b0 /></g>
<g transform=translate(0,41)><rect x=0 width=54 fill=#9c9c9c /><rect x=0 width=2 fill=#a4a4a6 /><rect x=2 width=1 fill=#b0b0b0 /><rect x=3 width=1 fill=#a4a4a6 /><rect x=4 width=3 fill=#909290 /><rect x=7 width=1 fill=#a0a0a0 /><rect x=8 width=4 fill=#8e908e /><rect x=54 width=1 fill=#a3a3a3 /><rect x=55 width=1 fill=#5a5a5a /><rect x=56 width=2 fill=#585856 /><rect x=58 width=2 fill=#484846 /><rect x=60 width=1 fill=#505050 /><rect x=61 width=1 fill=#484846 /><rect x=62 width=1 fill=#4e4e4e /><rect x=63 width=1 fill=#a0a0a0 /><rect x=64 width=1 fill=#b8b8b8 /><rect x=65 width=3 fill=#a0a0a0 /><rect x=68 width=1 fill=#acacb0 /><rect x=69 width=2 fill=#a2a2a4 /><rect x=71 width=1 fill=#acacb0 /><rect x=72 width=1 fill=#b8b8b8 /><rect x=73 width=1 fill=#a8a8a8 /><rect x=74 width=1 fill=#a0a0a0 /><rect x=75 width=1 fill=#acacb0 /><rect x=76 width=3 fill=#a4a4a6 /></g>
<g transform=translate(0,42)><rect x=0 width=79 fill=#50504e /><rect x=2 width=1 fill=#bbb /><rect x=3 width=1 fill=#7a7a7a /><rect x=4 width=2 fill=#484846 /><rect x=6 width=1 fill=#a8a8a8 /><rect x=7 width=1 fill=#6a6a6a /><rect x=8 width=1 fill=#444 /><rect x=9 width=1 fill=#555 /><rect x=10 width=1 fill=#707070 /><rect x=11 width=1 fill=#666 /><rect x=12 width=1 fill=#5c5c5c /><rect x=13 width=1 fill=#777 /><rect x=14 width=1 fill=#666 /><rect x=55 width=2 fill=#2a3038 /><rect x=57 width=1 fill=#25354f /><rect x=58 width=1 fill=#5a5a5a /><rect x=59 width=2 fill=#8a8a88 /><rect x=61 width=1 fill=#444 /><rect x=62 width=1 fill=#3a3a38 /><rect x=63 width=1 fill=#ababab /><rect x=64 width=1 fill=#c8c8c6 /><rect x=65 width=1 fill=#6a6a6a /><rect x=66 width=1 fill=#4a4a4a /><rect x=67 width=1 fill=#9f9f9f /><rect x=68 width=1 fill=#c0c0c0 /><rect x=69 width=2 fill=#484846 /><rect x=71 width=1 fill=#7a7a7a /><rect x=72 width=1 fill=#484846 /><rect x=73 width=1 fill=#7a7a7a /><rect x=74 width=1 fill=#555 /><rect x=75 width=3 fill=#666 /></g>
<g transform=translate(0,43)><rect x=0 width=79 fill=#0f0d0d /><rect x=2 width=1 fill=#1a1a18 /><rect x=29 width=1 fill=#202830 /><rect x=35 width=1 fill=#252d35 /><rect x=37 width=1 fill=#222a33 /><rect x=40 width=1 fill=#222a33 /><rect x=63 width=1 fill=#333 /><rect x=64 width=1 fill=#3c3c3c /><rect x=68 width=1 fill=#333 /><rect x=69 width=2 fill=#181818 /><rect x=71 width=1 fill=#333 /><rect x=72 width=1 fill=#3c3c3c /><rect x=73 width=1 fill=#262626 /><rect x=75 width=2 fill=#383838 /><rect x=77 width=2 fill=#1e1e1e /></g>
<g transform=translate(0,44)><rect x=0 width=79 fill=#262626 /></g>
<g transform=translate(0,45)><rect x=0 width=79 fill=#3e3e3c /></g>
<g transform=translate(0,46)><rect x=0 width=79 fill=#3a3a38 /></g>
<g transform=translate(0,47)><rect x=0 width=79 fill=#363634 /></g>
<g transform=translate(0,48)><rect x=0 width=79 fill=#303030 /><rect x=0 width=1 fill=#a0a2a0 /><rect x=1 width=2 fill=#8a8a8a /><rect x=3 width=1 fill=#5c5c5c /><rect x=4 width=1 fill=#999b99 /><rect x=5 width=1 fill=#5a5a5a /><rect x=6 width=1 fill=#999b99 /><rect x=7 width=1 fill=#808080 /><rect x=8 width=1 fill=#666 /><rect x=9 width=4 fill=#8a8a8a /><rect x=13 width=1 fill=#808080 /><rect x=14 width=1 fill=#999b99 /><rect x=15 width=1 fill=#909090 /><rect x=16 width=1 fill=#666 /><rect x=17 width=3 fill=#8a8a8a /><rect x=20 width=1 fill=#808080 /><rect x=21 width=1 fill=#707070 /><rect x=22 width=3 fill=#8a8a8a /><rect x=25 width=1 fill=#7a7a7a /><rect x=26 width=1 fill=#999 /><rect x=27 width=1 fill=#808080 /><rect x=28 width=1 fill=#707070 /><rect x=29 width=2 fill=#999b99 /><rect x=31 width=1 fill=#8a8a8a /><rect x=32 width=1 fill=#5c5c5c /><rect x=33 width=1 fill=#444 /><rect x=34 width=1 fill=#8a8a8a /><rect x=35 width=1 fill=#7a7a7a /><rect x=36 width=1 fill=#a3a3a3 /><rect x=37 width=2 fill=#808080 /><rect x=39 width=1 fill=#a3a3a3 /><rect x=40 width=1 fill=#b0b0b0 /><rect x=41 width=1 fill=#666 /></g>
<g transform=translate(0,49)><rect x=0 width=79 fill=#303030 /><rect x=0 width=1 fill=#444 /><rect x=1 width=1 fill=#4e4e4e /><rect x=2 width=1 fill=#444 /><rect x=3 width=1 fill=#383838 /><rect x=4 width=1 fill=#444 /><rect x=5 width=1 fill=#3a3a3a /><rect x=6 width=2 fill=#4e4e4e /><rect x=8 width=2 fill=#404040 /><rect x=10 width=2 fill=#4a4a4a /><rect x=12 width=1 fill=#505050 /><rect x=13 width=1 fill=#4a4a4a /><rect x=14 width=1 fill=#484848 /><rect x=15 width=1 fill=#666 /><rect x=16 width=1 fill=#444 /><rect x=17 width=1 fill=#383838 /><rect x=18 width=3 fill=#484848 /><rect x=21 width=1 fill=#3c3c3c /><rect x=22 width=1 fill=#444 /><rect x=23 width=1 fill=#505050 /><rect x=24 width=1 fill=#3e3e3e /><rect x=25 width=2 fill=#555 /><rect x=27 width=1 fill=#4a4a4a /><rect x=28 width=2 fill=#3e3e3e /><rect x=30 width=2 fill=#4e4e4e /><rect x=32 width=1 fill=#444 /><rect x=33 width=1 fill=#2e2e2e /><rect x=34 width=1 fill=#383838 /><rect x=35 width=1 fill=#4e4e4e /><rect x=36 width=2 fill=#444 /><rect x=38 width=2 fill=#4e4e4e /><rect x=40 width=1 fill=#555 /><rect x=41 width=1 fill=#4a4a4a /></g>
<g transform=translate(0,50)><rect x=0 width=79 fill=#2a2a2a /><rect x=0 width=1 fill=#3c3c3c /><rect x=1 width=1 fill=#8a8a8a /><rect x=2 width=1 fill=#5c5c5c /><rect x=21 width=1 fill=#3c3c3c /><rect x=22 width=5 fill=#5c5c5a /><rect x=27 width=1 fill=#444 /></g>
<g transform=translate(0,51)><rect x=0 width=79 fill=#2c2c2a /><rect x=0 width=1 fill=#acacac /><rect x=1 width=2 fill=#9999aa /><rect x=3 width=1 fill=#4a4a4a /><rect x=4 width=1 fill=#666 /><rect x=5 width=1 fill=#888 /><rect x=6 width=1 fill=#999 /><rect x=7 width=4 fill=#888 /><rect x=11 width=1 fill=#555 /><rect x=12 width=1 fill=#888 /><rect x=13 width=2 fill=#222 /><rect x=15 width=1 fill=#333 /><rect x=16 width=1 fill=#484848 /><rect x=17 width=1 fill=#444 /><rect x=18 width=1 fill=#404040 /><rect x=19 width=1 fill=#303030 /><rect x=20 width=1 fill=#3e3e3e /><rect x=21 width=1 fill=#e5e7e6 /><rect x=22 width=1 fill=#ddd /><rect x=23 width=1 fill=#e0e2e0 /><rect x=24 width=1 fill=#e5e7e6 /><rect x=25 width=1 fill=#e5e3e4 /><rect x=26 width=1 fill=#e2e4e3 /><rect x=27 width=1 fill=#f0f0f0 /><rect x=28 width=1 fill=#5c5c5c /><rect x=29 width=8 fill=#222 /><rect x=37 width=1 fill=#3a3a38 /><rect x=38 width=1 fill=#484848 /><rect x=39 width=1 fill=#3a3a3a /><rect x=40 width=2 fill=#4c4c4c /><rect x=42 width=2 fill=#555 /><rect x=44 width=2 fill=#3e3e3c /><rect x=46 width=2 fill=#505050 /><rect x=48 width=1 fill=#3a3a38 /><rect x=49 width=1 fill=#252525 /><rect x=50 width=1 fill=#383836 /><rect x=51 width=1 fill=#404040 /><rect x=52 width=2 fill=#4e4e4e /><rect x=54 width=1 fill=#555 /><rect x=55 width=1 fill=#4a4a4a /><rect x=56 width=1 fill=#404040 /><rect x=57 width=2 fill=#2e2e2e /><rect x=59 width=1 fill=#3e3e3e /><rect x=60 width=1 fill=#555 /><rect x=61 width=1 fill=#3e3e3e /><rect x=62 width=2 fill=#4a4a4a /><rect x=64 width=1 fill=#2e2e2e /><rect x=65 width=1 fill=#252525 /><rect x=66 width=1 fill=#3a3a3a /><rect x=67 width=1 fill=#444 /><rect x=68 width=1 fill=#3a3a3a /><rect x=69 width=1 fill=#555 /><rect x=70 width=2 fill=#444 /><rect x=72 width=1 fill=#4a4a4a /><rect x=73 width=1 fill=#404040 /><rect x=74 width=1 fill=#4e4e4e /><rect x=75 width=2 fill=#2a2a2a /><rect x=77 width=1 fill=#3c3c3c /><rect x=78 width=1 fill=#383838 /></g>
<g transform=translate(0,52)><rect x=0 width=79 fill=#2c2c2a /><rect x=0 width=1 fill=#dc9fb0 /><rect x=1 width=1 fill=#d54b84 /><rect x=2 width=1 fill=#9a809a /><rect x=3 width=1 fill=#555 /><rect x=4 width=8 fill=#262626 /><rect x=12 width=4 fill=#222 /><rect x=16 width=1 fill=#555 /><rect x=17 width=1 fill=#808080 /><rect x=18 width=1 fill=#5c5c5c /><rect x=19 width=1 fill=#333 /><rect x=20 width=1 fill=#555 /><rect x=21 width=1 fill=#f2f3f4 /><rect x=22 width=1 fill=#c3c3c3 /><rect x=23 width=1 fill=#b0b0b4 /><rect x=24 width=2 fill=#c0c0c0 /><rect x=26 width=1 fill=#b0b0b0 /><rect x=27 width=1 fill=#e5e5e5 /><rect x=28 width=1 fill=#808080 /><rect x=29 width=8 fill=#1e1e1c /><rect x=37 width=1 fill=#3a3a3a /><rect x=38 width=1 fill=#666 /><rect x=39 width=1 fill=#888 /><rect x=40 width=1 fill=#555 /><rect x=41 width=2 fill=#666 /><rect x=43 width=1 fill=#777 /><rect x=44 width=2 fill=#3e3e3c /><rect x=46 width=2 fill=#505050 /><rect x=48 width=1 fill=#383838 /><rect x=49 width=1 fill=#252525 /><rect x=50 width=1 fill=#383838 /><rect x=51 width=2 fill=#555 /><rect x=53 width=1 fill=#606060 /><rect x=54 width=2 fill=#808080 /><rect x=56 width=1 fill=#5c5c5c /><rect x=57 width=2 fill=#2e2e2e /><rect x=59 width=1 fill=#4a4a4a /><rect x=60 width=1 fill=#8a8a8a /><rect x=61 width=1 fill=#484848 /><rect x=62 width=1 fill=#808080 /><rect x=63 width=1 fill=#666 /><rect x=64 width=1 fill=#383838 /><rect x=65 width=1 fill=#282828 /><rect x=66 width=1 fill=#383838 /><rect x=67 width=1 fill=#666 /><rect x=68 width=1 fill=#383838 /><rect x=69 width=1 fill=#707070 /><rect x=70 width=4 fill=#888 /><rect x=74 width=1 fill=#505050 /><rect x=75 width=2 fill=#2c2c2c /><rect x=77 width=1 fill=#4a4a4a /><rect x=78 width=1 fill=#404040 /></g>
<g transform=translate(0,53)><rect x=0 width=79 fill=#2e2e2c /><rect x=0 width=1 fill=#666 /><rect x=1 width=1 fill=#d2d2d2 /><rect x=2 width=1 fill=#a0a0a0 /><rect x=3 width=1 fill=#1e1e1c /><rect x=4 width=1 fill=#222 /><rect x=5 width=1 fill=#303030 /><rect x=6 width=1 fill=#3a3a3a /><rect x=7 width=1 fill=#303030 /><rect x=8 width=2 fill=#3c3c3c /><rect x=10 width=1 fill=#333 /><rect x=11 width=1 fill=#3e3e3e /><rect x=12 width=1 fill=#2a2a2a /><rect x=13 width=2 fill=#1e1e1c /><rect x=15 width=5 fill=#282828 /><rect x=20 width=1 fill=#1e1e1c /><rect x=21 width=1 fill=#999b99 /><rect x=22 width=5 fill=#bebebe /><rect x=27 width=1 fill=#a3a3a3 /><rect x=28 width=1 fill=#222 /><rect x=29 width=10 fill=#1e1e1c /></g>
<g transform=translate(0,54)><rect x=0 width=79 fill=#1a1a1a /></g>
<g transform=translate(0,55)><rect x=0 width=79 fill=#2c2c2a /></g>
<g transform=translate(0,56)><rect x=0 width=79 fill=#2c2c2a /><rect x=1 width=2 fill=#6a6a6a /><rect x=3 width=1 fill=#555 /><rect x=4 width=1 fill=#6a6a6a /><rect x=5 width=1 fill=#505050 /><rect x=6 width=1 fill=#6a6a6a /><rect x=7 width=1 fill=#606060 /><rect x=8 width=1 fill=#505050 /><rect x=9 width=1 fill=#555 /><rect x=10 width=1 fill=#6a6a6a /><rect x=11 width=2 fill=#585858 /><rect x=13 width=1 fill=#6a6a6a /><rect x=14 width=1 fill=#555 /></g>
<g transform=translate(0,57)><rect x=0 width=79 fill=#282c33 /></g>

<rect x=79 y=0 width=1 style="height:1px" fill=#4e4e4c />
<rect x=79 y=1 width=1 style="height:3px" fill=#6e6e6e />
<rect x=79 y=4 width=1 style="height:10px" fill=#636363 />
<rect x=79 y=14 width=1 style="height:15px" fill=#7a7a78 />
<rect x=79 y=29 width=1 style="height:7px" fill=#6c6c6c />
<rect x=79 y=36 width=1 style="height:5px" fill=#626262 />
<rect x=79 y=41 width=1 style="height:2px" fill=#555553 />
<rect x=79 y=43 width=1 style="height:1px" fill=#333 />
<rect x=79 y=44 width=1 style="height:14px" fill=#383836 />

<g transform=translate(0,50.34)><rect x=81 style="height:.66px" width=1 fill=#333 /><rect x=82 style="height:.66px" width=2 fill=#3a3a3a /><rect x=84 style="height:.66px" width=2 fill=#484848 /><rect x=86 style="height:.66px" width=1 fill=#444 /><rect x=87 style="height:.66px" width=4 fill=#3a3a3a /><rect x=91 style="height:.66px" width=1 fill=#242e38 /><rect x=92 style="height:.66px" width=1 fill=#3a3a3a /><rect x=93 style="height:.66px" width=1 fill=#333 /><rect x=94 style="height:.66px" width=1 fill=#242e38 /></g>
<g transform=translate(0,51)><rect x=81 width=1 fill=#999 /><rect x=82 width=1 fill=#d0d0d0 /><rect x=83 width=3 fill=#7aabea /><rect x=86 width=1 fill=#b5dbf3 /><rect x=87 width=1 fill=#aac6dc /><rect x=88 width=2 fill=#8eb0bc /><rect x=90 width=1 fill=#84a4b4 /><rect x=91 width=1 fill=#808080 /><rect x=92 width=1 fill=#686868 /><rect x=93 width=2 fill=#84a4b4 /><rect x=95 width=1 fill=#26323c /><rect x=96 width=1 fill=#666 /><rect x=97 width=1 fill=#757575 /><rect x=98 width=1 fill=#555 /><rect x=99 width=1 fill=#6a6a6a /><rect x=100 width=1 fill=#585858 /><rect x=101 width=1 fill=#666 /><rect x=102 width=1 fill=#707070 /><rect x=103 width=1 fill=#5a5a5a /><rect x=104 width=1 fill=#757575 /><rect x=105 width=1 fill=#4e4e4e /><rect x=106 width=1 fill=#7a7a7a /><rect x=107 width=1 fill=#2a2a2a /><rect x=112 width=1 fill=#222 /></g>
<g transform=translate(0,52)><rect x=81 width=1 fill=#999 /><rect x=82 width=1 fill=#c8c8c8 /><rect x=83 width=1 fill=#a6c0d6 /><rect x=84 width=2 fill=#b5dbf3 /><rect x=86 width=1 fill=#dbeaf1 /><rect x=87 width=2 fill=#a6c0d8 /><rect x=89 width=1 fill=#8eb0bc /><rect x=90 width=1 fill=#a3a3a3 /><rect x=91 width=1 fill=#b89a88 /><rect x=92 width=1 fill=#a86a78 /><rect x=93 width=1 fill=#70708e /><rect x=94 width=1 fill=#84a4b4 /><rect x=95 width=1 fill=#26323c /><rect x=96 width=17 fill=#1c1c1c /><rect x=98 width=3 fill=#232323 /><rect x=103 width=3 fill=#232323 /></g>
<g transform=translate(0,53)><rect x=81 width=1 fill=#999 /><rect x=82 width=2 fill=#c0c0c0 /><rect x=84 width=2 fill=#f0f2f5 /><rect x=86 width=1 fill=#dbeaf1 /><rect x=87 width=1 fill=#a6c0d8 /><rect x=88 width=2 fill=#8eb0bc /><rect x=90 width=1 fill=#999 /><rect x=91 width=1 fill=#b89a88 /><rect x=92 width=1 fill=#7e5a50 /><rect x=93 width=1 fill=#999 /><rect x=94 width=1 fill=#84a4b4 /><rect x=95 width=1 fill=#26323c /><rect x=96 width=2 fill=#666 /><rect x=98 width=2 fill=#6a6a6a /><rect x=100 width=1 fill=#757575 /><rect x=101 width=1 fill=#484848 /><rect x=102 width=1 fill=#707070 /><rect x=103 width=1 fill=#4e4e4e /><rect x=104 width=2 fill=#5c5c5c /><rect x=106 width=1 fill=#444 /><rect x=107 width=1 fill=#585858 /><rect x=108 width=1 fill=#6a6a6a /><rect x=109 width=1 fill=#4a4a4a /><rect x=110 width=1 fill=#707070 /><rect x=111 width=1 fill=#3a3a3a /><rect x=112 width=1 fill=#151515 /></g>
<g transform=translate(0,54)><rect x=81 width=1 fill=#999 /><rect x=82 width=1 fill=#ccc /><rect x=83 width=1 fill=#dedede /><rect x=84 width=2 fill=#f0f2f5 /><rect x=86 width=1 fill=#e8f0f4 /><rect x=87 width=2 fill=#ccc /><rect x=89 width=1 fill=#c8c8c8 /><rect x=90 width=1 fill=#999 /><rect x=91 width=1 fill=#7e5a50 /><rect x=92 width=1 fill=#3e3a38 /><rect x=93 width=1 fill=#888 /><rect x=94 width=1 fill=#84a4b4 /><rect x=95 width=1 fill=#26323c /><rect x=96 width=1 fill=#222 /><rect x=97 width=1 fill=#1e1e1e /></g>
<g transform=translate(0,55)><rect x=81 width=1 fill=#999 /><rect x=82 width=2 fill=#d4d4d4 /><rect x=84 width=1 fill=#c0c0c0 /><rect x=85 width=1 fill=#d0d0d0 /><rect x=86 width=1 fill=#dedede /><rect x=87 width=2 fill=#c6c6c6 /><rect x=89 width=1 fill=#d8d8d8 /><rect x=90 width=1 fill=#aaa /><rect x=91 width=1 fill=#111 /><rect x=92 width=1 fill=#333 /><rect x=93 width=1 fill=#b89a88 /><rect x=94 width=1 fill=#aaa /><rect x=95 width=1 fill=#26323c /><rect x=96 width=1 fill=#383838 /><rect x=97 width=1 fill=#2c2c2c /></g>
<g transform=translate(0,56)><rect x=81 width=1 fill=#999 /><rect x=82 width=2 fill=#ececec /><rect x=84 width=2 fill=#e5e5e5 /><rect x=86 width=1 fill=#f5f5f3 /><rect x=87 width=2 fill=#ddd /><rect x=89 width=1 fill=#d4d4d4 /><rect x=90 width=1 fill=#bbb /><rect x=91 width=1 fill=#111 /><rect x=92 width=1 fill=#222 /><rect x=93 width=1 fill=#bbb /><rect x=94 width=1 fill=#999 /><rect x=95 width=1 fill=#26323c /><rect x=96 width=2 fill=#3c3c3c /><rect x=98 width=2 fill=#383838 /><rect x=100 width=1 fill=#242424 /></g>
</svg>

<div class="a" style="left:990px;top:765px;width:417px;height:2px;background:#1e1e1e"></div>
<div class="a" style="left:998px;top:767px;width:90px;height:6px;background:#eee;overflow:hidden"><span style="position:absolute;left:12px;top:-1px;color:#222;font-size:13px;line-height:13px;white-space:nowrap">quality, 7.1</span></div>
<div class="a" style="left:1140px;top:767px;width:36px;height:6px;background:#bbb"></div>

<svg class="a" style="left:24px;top:15px" width="24" height="24" viewBox="0 0 24 24"><path d="M3 6.5h18M3 12.5h18M3 18.5h18" stroke="#fff" stroke-width="1"/></svg>
<svg class="a" style="left:72px;top:17px" width="96" height="22" viewBox="0 0 96 22">
<rect x="0" y="1" width="29" height="20" rx="5.5" fill="#ff0033"/>
<path d="M11.5 6.5l8 4.5-8 4.5z" fill="#fff"/>
<text x="31" y="20" font-family="'Liberation Sans Narrow','Liberation Sans',sans-serif" font-size="24" font-weight="400" fill="#fff" stroke="#fff" stroke-width=".4" textLength="62" lengthAdjust="spacingAndGlyphs">YouTube</text>
</svg>
<div class="a" style="left:396px;top:9px;width:536px;height:38px;background:#121212;border-radius:19px 0 0 19px"></div>
<div class="a" style="left:411px;top:18px;font-size:16px;line-height:19px;color:#716a70">Search</div>
<div class="a" style="left:931px;top:9px;width:63px;height:38px;background:#474745;border-radius:0 19px 19px 0;border-left:1px solid #555"></div>
<svg class="a" style="left:951px;top:16px" width="24" height="24" viewBox="0 0 24 24" fill="none" stroke="#f1f1f1" stroke-width="1.1"><circle cx="11.2" cy="11.2" r="7.7"/><path d="M16.8 16.8l4.2 4.2"/></svg>
<div class="a" style="left:1011px;top:8px;width:40px;height:40px;border-radius:50%;background:#2f2f2f"></div>
<svg class="a" style="left:1019px;top:16px" width="24" height="24" viewBox="0 0 24 24"><rect x="8.5" y="2" width="7" height="14" rx="3.5" fill="#fff"/><path d="M5.5 11.5c0 8.5 13 8.5 13 0M12 18v4" fill="none" stroke="#fff" stroke-width="1.2"/></svg>
<div class="a" style="left:1196px;top:10px;width:97px;height:36px;border-radius:18px;background:#272727"></div>
<svg class="a" style="left:1207px;top:16px" width="20" height="24" viewBox="0 0 20 24"><path d="M1.500 11.500h17M10 3v17" stroke="#fff" stroke-width="1.1"/></svg>
<div class="a" style="left:1236px;top:19px;font-size:14px;font-weight:700;line-height:17px;letter-spacing:-.4px;color:#f1f1f1">Create</div>
<svg class="a" style="left:1309px;top:16px" width="24" height="24" viewBox="0 0 24 24" fill="none" stroke="#fff" stroke-width="1.15"><path d="M12 3.200c-3.500 0-5.600 2.700-5.600 6v3.400c0 2-.9 3.300-2.400 5h16c-1.500-1.700-2.400-3-2.400-5V9.200c0-3.300-2.100-6-5.600-6z" stroke-linejoin="round"/><path d="M12 2v1.200M9.800 18c0 3.200 4.400 3.200 4.400 0"/></svg>
<svg class="a" style="left:1363px;top:12px" width="32" height="32" viewBox="0 0 32 32">
<defs><clipPath id="av"><circle cx="16" cy="16" r="16"/></clipPath></defs>
<g clip-path="url(#av)"><rect width="32" height="32" fill="#b6d9f0"/><rect y="25" width="32" height="7" fill="#c3cbd3"/>
<path d="M8 10l-.5-6h2l.8 4zM12 10l.5-6h2l-.6 6z" fill="#f0d9cc"/>
<ellipse cx="10.500" cy="17" rx="8" ry="7.500" fill="#f4e3b0"/><rect x="6" y="21" width="10" height="8" fill="#f1dfae"/>
<path d="M17 11l2-3 3 2h4l3-2 1 4z" fill="#fff"/><ellipse cx="23.500" cy="17" rx="7.500" ry="7.500" fill="#fafafa"/><rect x="19" y="22" width="9" height="7" fill="#eee"/>
<rect x="15" y="21" width="3" height="10" fill="#667"/>
<circle cx="8" cy="16" r=".9" fill="#333"/><circle cx="13" cy="16" r=".9" fill="#333"/><circle cx="21" cy="16" r=".9" fill="#333"/><circle cx="26" cy="16" r=".9" fill="#333"/>
<circle cx="6.500" cy="19" r="1.200" fill="#eeb0a8"/><circle cx="14" cy="19" r="1.200" fill="#eeb0a8"/></g>
</svg>

<svg class="a" style="left:1426px;top:5px" width="14" height="7"><path d="M2 6l5-5 5 5z" fill="#a0a0a0"/></svg>
<div class="a" style="left:1428px;top:18px;width:9px;height:137px;border-radius:5px;background:#a8a8a8"></div>
<svg class="a" style="left:1426px;top:760px" width="14" height="7"><path d="M2 1l5 5 5-5z" fill="#a8a8a8"/></svg>

<div class="a panel"><div class="inner"></div></div>
<div class="a hl"></div>
<svg class="a" style="left:1016px;top:98px" width="100" height="26"><text x="0" y="18" font-family="'Liberation Sans',sans-serif" font-weight="700" font-size="19.500" fill="#f1f1f1" textLength="87" lengthAdjust="spacingAndGlyphs">Transcript</text></svg>
<svg class="a" style="left:1325px;top:100px" width="10" height="18"><circle cx="5" cy="3" r="1.500" fill="#fff"/><circle cx="5" cy="9" r="1.500" fill="#fff"/><circle cx="5" cy="15" r="1.500" fill="#fff"/></svg>
<svg class="a" style="left:1367px;top:98px" width="22" height="22"><path d="M2.500 2.500l17 17M19.500 2.500l-17 17" stroke="#f1f1f1" stroke-width="1"/></svg>
<div class="a" style="left:1016px;top:137px;width:368px;height:32px;background:#0f0f0f;border-radius:4px"></div>
<svg class="a" style="left:1032px;top:141px" width="24" height="24" viewBox="0 0 24 24" fill="none" stroke="#f1f1f1" stroke-width="1.700"><circle cx="11" cy="11" r="7.700"/><path d="M16.500 16.500l4.500 4.500"/></svg>
<div class="a" style="left:1076px;top:143px;font-size:16px;line-height:19px;color:#909090">Search in video</div>

<div class="row" style="top:193px"><span class="ts">1:00</span><span class="tx">of the video you can go and tap on the</span></div>
<div class="row" style="top:231px"><span class="ts">1:02</span><span class="tx">the timestamp just here and then it's</span></div>
<div class="row" style="top:269px"><span class="ts">1:04</span><span class="tx">going to go and take you that exact part</span></div>
<div class="row" style="top:307px"><span class="ts">1:05</span><span class="tx">of the video and also if you just want</span></div>
<div class="row" style="top:345px"><span class="ts">1:07</span><span class="tx">to go and remove the the timestamps as</span></div>
<div class="row" style="top:383px"><span class="ts">1:09</span><span class="tx">well then all you need to do is going to</span></div>
<div class="row" style="top:421px"><span class="ts">1:11</span><span class="tx">tap into three dots in the top right of</span></div>
<div class="row" style="top:459px"><span class="ts">1:12</span><span class="tx">the transcript box just like this and</span></div>
<div class="row" style="top:497px"><span class="ts">1:14</span><span class="tx">then you can go and press toggle</span></div>
<div class="row" style="top:535px"><span class="ts">1:15</span><span class="tx">timestamps and they'll be removed and if</span></div>

<svg class="a" style="left:1388px;top:186px" width="10" height="6"><path d="M.5 5.500l4.500-5 4.500 5z" fill="#a8a8a8"/></svg>
<div class="a" style="left:1388px;top:380px;width:9px;height:50px;border-radius:5px;background:#a8a8a8"></div>
<svg class="a" style="left:1388px;top:553px" width="10" height="6"><path d="M.5.500l4.500 5 4.500-5z" fill="#a8a8a8"/></svg>
<div class="a" style="left:1016px;top:580px;font-size:16px;line-height:19px;color:#e0e0e0;white-space:nowrap">English (auto-generated)</div>

<div class="a chip" style="left:999px;width:40px;background:#f1f1f1;color:#0f0f0f">All</div>
<div class="a chip" style="left:1047px;width:154px">Application software</div>
<div class="a chip" style="left:1209px;width:111px">Presentations</div>
<div class="a chip" style="left:1328px;width:24px;background:linear-gradient(90deg,#272727,#0f0f0f);color:#666;text-align:left;padding-left:12px">L</div>
<svg class="a" style="left:1371px;top:657px" width="12" height="16"><path d="M2.500 2.500l6 6-6 6" fill="none" stroke="#f1f1f1" stroke-width="1"/></svg>
</div>
</body>
</html>
